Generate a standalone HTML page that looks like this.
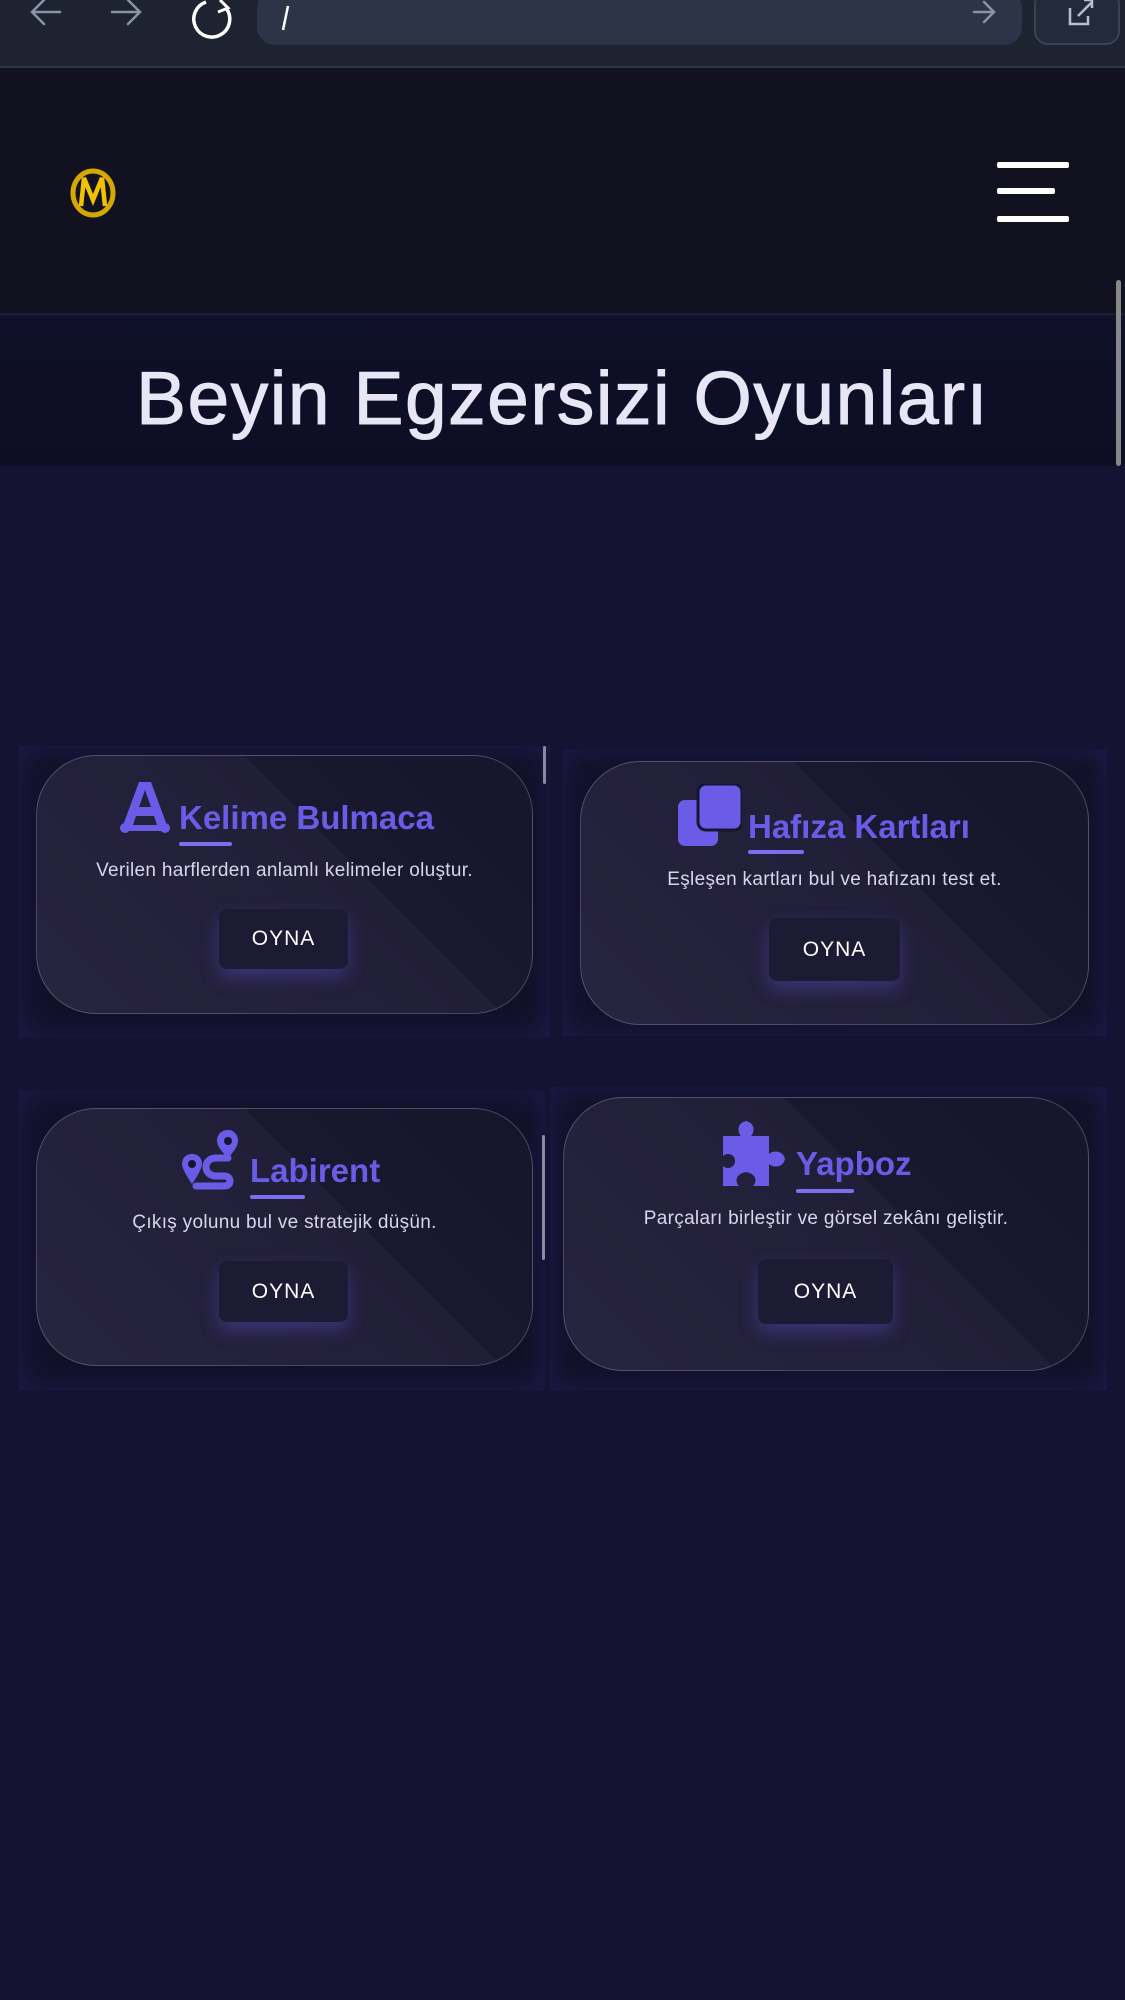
<!DOCTYPE html>
<html><head><meta charset="utf-8">
<style>
*{margin:0;padding:0;box-sizing:border-box}
body{width:1125px;height:2000px;background:#141432;font-family:"Liberation Sans",sans-serif;position:relative;overflow:hidden}
.abs{position:absolute}
.bar{left:0;top:0;width:1125px;height:68px;background:#1d2331;border-bottom:2px solid #2c3446}
.url{left:257px;top:-10px;width:765px;height:55px;background:#2d3447;border-radius:18px}
.ext{left:1034px;top:-10px;width:86px;height:55px;border:2px solid #3a4256;border-radius:14px;background:#232a3a}
.hdr{left:0;top:68px;width:1125px;height:247px;background:#111120;border-bottom:2px solid #1c1d35}
.band{left:0;top:316px;width:1125px;height:150px;background:linear-gradient(180deg,#0f1029,#0d0e24)}
.title{left:0;top:350px;width:1125px;text-align:center;color:#e8e6f6;font-size:75px;line-height:96px;letter-spacing:1.5px;-webkit-text-stroke:1px #e8e6f6}
.ham{left:997px;width:72px;height:6px;background:#fff;border-radius:2px}
.outer{background:#111128;box-shadow:inset 0 0 30px rgba(60,50,150,0.35)}
.card{border:1.5px solid rgba(200,200,230,0.28);border-radius:60px;background:linear-gradient(225deg,#16152c 0%,#19182f 38%,#211e38 38.3%,#27243f 100%);overflow:hidden}
.ct{color:#6b5ce7;font-weight:bold;font-size:33px;white-space:nowrap}
.ul{height:4px;background:#7d6ef0;border-radius:2px}
.desc{color:#d8d6ec;font-size:19px;text-align:center;white-space:nowrap;letter-spacing:0.3px}
.btn{background:#1d1b33;border-radius:8px;color:#fff;font-size:21px;letter-spacing:1px;display:flex;align-items:center;justify-content:center;box-shadow:0 8px 18px rgba(110,90,230,0.35)}
.sb{width:3px;background:#8a8aa0;border-radius:2px}
</style></head><body>
<div class="abs bar"></div>
<div class="abs url"></div>
<div class="abs ext"></div>
<svg class="abs" style="left:0;top:0" width="1125" height="60">
<g stroke="#8b93a7" stroke-width="2.5" fill="none" stroke-linecap="round">
<path d="M60 12H32M44 0L32 12L44 24"/>
<path d="M112 12H140M128 0L140 12L128 24"/>
<path d="M974 12H994M984 2L994 12L984 22"/>
</g>
<path d="M226 8A18 18 0 1 1 206 2" stroke="#fff" stroke-width="3.5" fill="none"/>
<path d="M220 0L228 8L218 12" stroke="#fff" stroke-width="3" fill="none"/>
<path d="M288 6L283 30" stroke="#fff" stroke-width="2.5"/>
<g stroke="#b8bfcf" stroke-width="2.5" fill="none"><path d="M1070 8V24H1088V16"/><path d="M1078 16L1092 2M1084 0H1092V8"/></g>
</svg>
<div class="abs hdr"></div>
<svg class="abs" style="left:66px;top:166px" width="54" height="54" viewBox="0 0 54 54">
<ellipse cx="27" cy="27" rx="20" ry="22" fill="none" stroke="#d4a800" stroke-width="5"/>
<path d="M15 40L18 12L27 34L36 12L39 40" stroke="#f2c200" stroke-width="4.5" fill="none"/>
</svg>
<div class="abs ham" style="top:162px"></div>
<div class="abs ham" style="top:188px;width:58px"></div>
<div class="abs ham" style="top:216px"></div>
<div class="abs band"></div>
<div class="abs title">Beyin Egzersizi Oyunları</div>
<div class="abs" style="left:1116px;top:280px;width:5px;height:186px;background:#888;border-radius:3px"></div>

<!-- card 1 -->
<div class="abs outer" style="left:19px;top:746px;width:531px;height:291px"></div>
<div class="abs card" style="left:36px;top:755px;width:497px;height:259px"></div>
<svg class="abs" style="left:118px;top:780px" width="54" height="56" viewBox="0 0 54 56"><path d="M21 2H33L50 48H40L36 36H18L14 48H4ZM21 27H33L27 10Z" fill="#6b5ce7"/><rect x="2" y="45" width="50" height="6" rx="3" fill="#6b5ce7"/><circle cx="7" cy="48" r="5" fill="#6b5ce7"/><circle cx="47" cy="48" r="5" fill="#6b5ce7"/></svg>
<div class="abs ct" style="left:179px;top:799px">Kelime Bulmaca</div>
<div class="abs ul" style="left:179px;top:842px;width:53px"></div>
<div class="abs desc" style="left:36px;top:860px;width:497px">Verilen harflerden anlamlı kelimeler oluştur.</div>
<div class="abs btn" style="left:219px;top:909px;width:129px;height:60px">OYNA</div>
<div class="abs sb" style="left:543px;top:746px;height:38px"></div>

<!-- card 2 -->
<div class="abs outer" style="left:563px;top:749px;width:544px;height:287px"></div>
<div class="abs card" style="left:580px;top:761px;width:509px;height:264px"></div>
<svg class="abs" style="left:678px;top:784px" width="64" height="62" viewBox="0 0 64 62"><rect x="0" y="16" width="40" height="46" rx="7" fill="#6b5ce7"/><rect x="20" y="0" width="44" height="46" rx="8" fill="#6b5ce7" stroke="#17162e" stroke-width="3"/></svg>
<div class="abs ct" style="left:748px;top:808px">Hafıza Kartları</div>
<div class="abs ul" style="left:748px;top:850px;width:56px"></div>
<div class="abs desc" style="left:580px;top:869px;width:509px">Eşleşen kartları bul ve hafızanı test et.</div>
<div class="abs btn" style="left:769px;top:918px;width:131px;height:63px">OYNA</div>

<!-- card 3 -->
<div class="abs outer" style="left:19px;top:1091px;width:526px;height:299px"></div>
<div class="abs card" style="left:36px;top:1108px;width:497px;height:258px"></div>
<svg class="abs" style="left:182px;top:1130px" width="64" height="64" viewBox="0 0 64 64"><path d="M46 0C39 0 35 5 35 11C35 18 46 28 46 28C46 28 56 18 56 11C56 5 52 0 46 0Z" fill="#6b5ce7"/><circle cx="46" cy="11" r="4" fill="#17162e"/><path d="M10 24C4 24 0 28 0 34C0 40 10 54 10 54C10 54 20 40 20 34C20 28 16 24 10 24Z" fill="#6b5ce7"/><circle cx="10" cy="34" r="4" fill="#17162e"/><path d="M46 28H34C28 28 24 32 24 37C24 42 28 46 34 46H42C46 46 48 48 48 51C48 54 46 56 42 56H14" stroke="#6b5ce7" stroke-width="7" fill="none" stroke-linecap="round"/></svg>
<div class="abs ct" style="left:250px;top:1152px">Labirent</div>
<div class="abs ul" style="left:250px;top:1195px;width:55px"></div>
<div class="abs desc" style="left:36px;top:1212px;width:497px">Çıkış yolunu bul ve stratejik düşün.</div>
<div class="abs btn" style="left:219px;top:1261px;width:129px;height:61px">OYNA</div>
<div class="abs sb" style="left:542px;top:1135px;height:125px"></div>

<!-- card 4 -->
<div class="abs outer" style="left:550px;top:1087px;width:557px;height:303px"></div>
<div class="abs card" style="left:563px;top:1097px;width:526px;height:274px"></div>
<svg class="abs" style="left:723px;top:1120px" width="66" height="66" viewBox="0 0 66 66"><path d="M0 16H18C14 12 14 3 23 1C32 3 32 12 28 16H46V34C50 30 60 30 62 39C60 48 50 48 46 44V66H30C34 62 34 54 23 52C12 54 12 62 16 66H0V46C4 50 12 48 12 41C12 34 4 32 0 36Z" fill="#6b5ce7"/></svg>
<div class="abs ct" style="left:796px;top:1145px">Yapboz</div>
<div class="abs ul" style="left:796px;top:1189px;width:58px"></div>
<div class="abs desc" style="left:563px;top:1208px;width:526px">Parçaları birleştir ve görsel zekânı geliştir.</div>
<div class="abs btn" style="left:758px;top:1259px;width:135px;height:65px">OYNA</div>
</body></html>
